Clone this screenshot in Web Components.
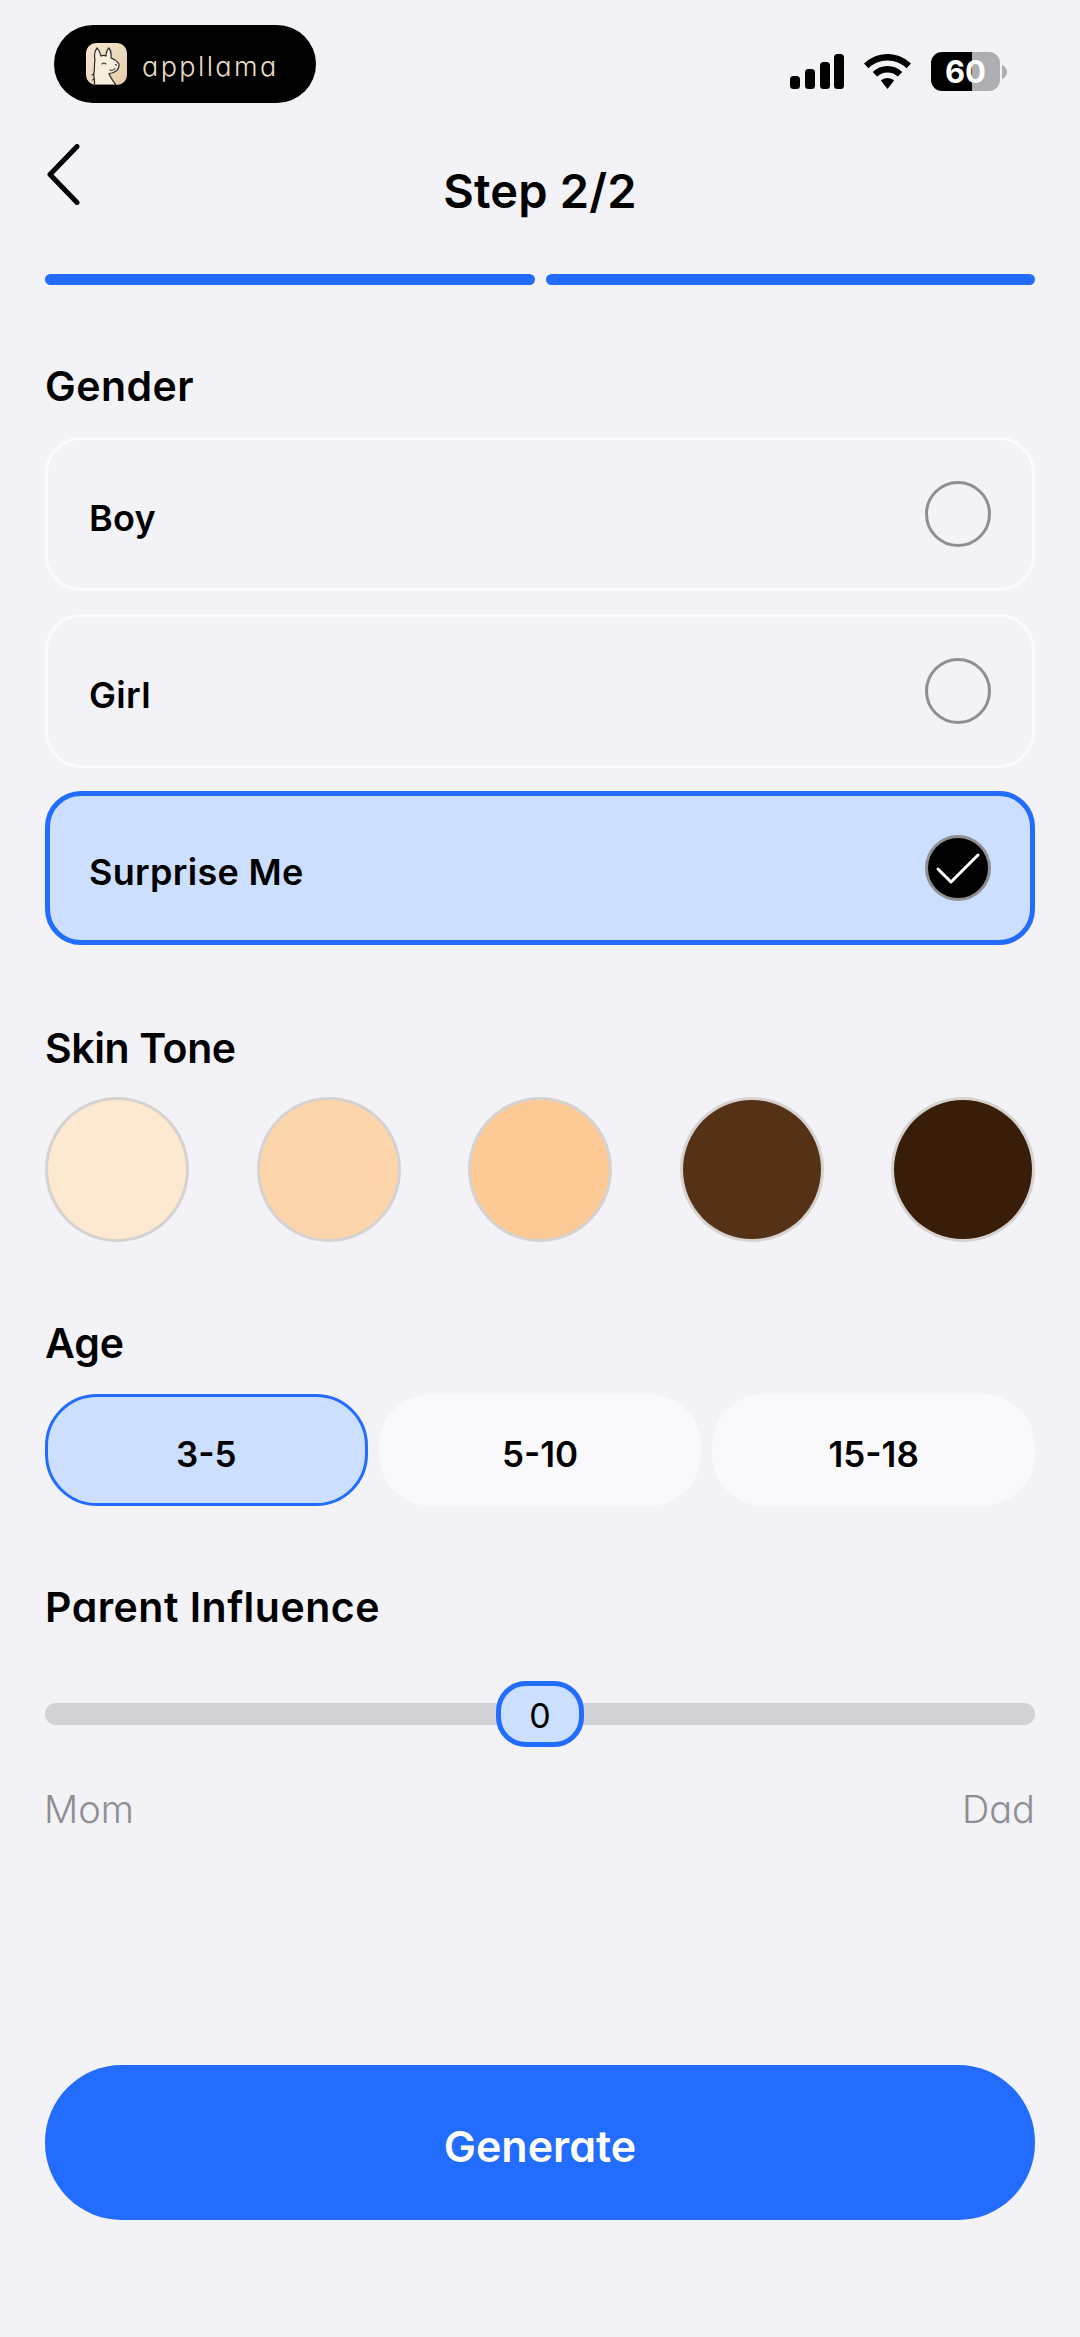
<!DOCTYPE html>
<html><head><meta charset="utf-8"><title>Step 2/2</title>
<style>
html,body{margin:0;padding:0;background:#f2f2f7}
body{font-family:"Inter","Noto Sans",sans-serif;color:#000;font-feature-settings:"cv11"}
</style></head><body>
<app-screen>
  <status-bar></status-bar>
  <nav-header>Step 2/2</nav-header>
  <step-progress></step-progress>
  <section-label style="margin-top:76px;margin-bottom:27px;letter-spacing:.5px">Gender</section-label>
  <option-list>
    <option-card>Boy</option-card>
    <option-card>Girl</option-card>
    <option-card selected>Surprise Me</option-card>
  </option-list>
  <section-label style="margin-top:78px;margin-bottom:25px;letter-spacing:-.4px">Skin Tone</section-label>
  <swatch-row>
    <skin-swatch color="#fde8d0"></skin-swatch>
    <skin-swatch color="#fdd5ab"></skin-swatch>
    <skin-swatch color="#fdc995"></skin-swatch>
    <skin-swatch color="#553216"></skin-swatch>
    <skin-swatch color="#381e09"></skin-swatch>
  </swatch-row>
  <section-label style="margin-top:76px;margin-bottom:27px">Age</section-label>
  <pill-row>
    <age-pill selected>3-5</age-pill>
    <age-pill>5-10</age-pill>
    <age-pill>15-18</age-pill>
  </pill-row>
  <section-label style="margin-top:76px;letter-spacing:.5px">Parent Influence</section-label>
  <influence-slider left="Mom" right="Dad" value="0"></influence-slider>
  <primary-button>Generate</primary-button>
</app-screen>
<script>
function def(name, html, init){
  const t=document.createElement('template');t.innerHTML=html;
  customElements.define(name,class extends HTMLElement{
    constructor(){super();this.attachShadow({mode:'open'}).appendChild(t.content.cloneNode(true));}
    connectedCallback(){if(init)init(this,this.shadowRoot);}
  });
}
def('app-screen',`<style>:host{display:flex;flex-direction:column;box-sizing:border-box;width:1080px;height:2337px;padding:25px 45px 0;background:#f2f2f7;overflow:hidden}</style><slot></slot>`);

def('status-bar',`<style>
:host{display:flex;align-items:center;justify-content:space-between;height:78px;padding:0 28px 0 9px}
.pill{display:flex;align-items:center;box-sizing:border-box;width:262px;height:78px;border-radius:39px;background:#000;padding:0 0 0 32px;gap:15px}
.app{width:41px;height:42px;border-radius:10px;display:block;overflow:hidden;flex:none}
.name{font:300 27px/1 "Inter",sans-serif;font-feature-settings:"cv11";color:#e9dcc8;letter-spacing:2.4px;margin-top:4px}
.sys{display:flex;align-items:center;gap:20px;margin-top:15px}
svg{display:block}
.bat{display:flex;align-items:center;gap:2px}
.cell{position:relative;width:69px;height:39px;border-radius:11px;overflow:hidden;background:linear-gradient(90deg,#000 0 41px,#aeaeb2 41px);display:flex;align-items:center;justify-content:center;font:700 31px/1 "Inter","Liberation Sans",sans-serif;color:#fff}
</style>
<div class="pill">
  <svg class="app" viewBox="0 0 41 42">
    <defs><linearGradient id="g" x1="0" y1="0" x2="1" y2="1"><stop offset="0" stop-color="#f6e8d2"/><stop offset="1" stop-color="#e2cca8"/></linearGradient></defs>
    <rect width="41" height="42" fill="url(#g)"/>
    <path d="M8.500 42C9 36 7 33 8 29C9 25 8 21 9 17C8 12 8.500 8 11 5C13.500 7 14 10 15 13C17 12 18.500 12 20 13C20 10 21 7 23 5C25.500 8 25.500 11 25 15C28 16 31 18 33 21C33.500 25 31 29 26 30L23 30.500C24 34 27 38 30 42Z" fill="#f8eedd" stroke="#2e2a26" stroke-width="1.200" stroke-linejoin="round"/>
    <path d="M16 21q2-2 4 0M24 27q3 1 5-1.500M29.500 21.500l1 .5M8 31l-2 1M8.500 36l-2 1" fill="none" stroke="#2e2a26" stroke-width="1.100" stroke-linecap="round"/>
  </svg>
  <span class="name">appllama</span>
</div>
<div class="sys">
  <svg width="54" height="35" viewBox="0 0 54 35" fill="#000"><rect x="0" y="22" width="10" height="13" rx="3.500"/><rect x="15" y="15" width="10" height="20" rx="3.500"/><rect x="30" y="8" width="10" height="27" rx="3.500"/><rect x="44" y="0" width="10" height="35" rx="3.500"/></svg>
  <svg width="47" height="35" viewBox="0 0 47 35" fill="#000"><path d="M23.500 0C32.500 0 40.800 3.600 47 9.500L42.600 14.200C37.600 9.500 30.900 6.600 23.500 6.600S9.400 9.500 4.400 14.200L0 9.500C6.200 3.600 14.500 0 23.500 0Z"/><path d="M23.500 12C29.200 12 34.400 14.200 38.300 17.900L33.900 22.600C31.200 20.100 27.500 18.500 23.500 18.500S15.800 20.100 13.100 22.600L8.700 17.900C12.600 14.200 17.800 12 23.500 12Z"/><path d="M23.500 24C26 24 28.400 25 30.100 26.600L23.500 35L16.900 26.600C18.600 25 21 24 23.500 24Z"/></svg>
  <div class="bat"><div class="cell">60</div><svg width="5" height="14" viewBox="0 0 5 14"><path d="M0 0C3 1 5 4 5 7S3 13 0 14Z" fill="#aeaeb2"/></svg></div>
</div>`);

def('nav-header',`<style>
:host{display:grid;grid-template-columns:1fr auto 1fr;height:171px;align-items:start}
svg{display:block;margin:41px 0 0 2px}
h1{margin:60px 0 0;font:600 47px/56px "Inter",sans-serif;font-feature-settings:"cv11";letter-spacing:.2px;text-align:center}
</style>
<svg width="33" height="61" viewBox="0 0 33 61" fill="none" stroke="#000" stroke-width="5" stroke-linecap="round" stroke-linejoin="round"><path d="M30 2.500L3 30.500L30 58.500"/></svg>
<h1><slot></slot></h1><span></span>`);

def('step-progress',`<style>
:host{display:flex;gap:11px;height:11px}
i{flex:1;background:#226cff;border-radius:6px}
</style><i></i><i></i>`);

def('section-label',`<style>:host{display:block;font:600 41px/48px "Inter",sans-serif;font-feature-settings:"cv11";padding-top:1px;margin-bottom:-1px}</style><slot></slot>`);

def('option-list',`<style>:host{display:flex;flex-direction:column;gap:23px}</style><slot></slot>`);

def('option-card',`<style>
:host{display:flex;align-items:center;justify-content:space-between;box-sizing:border-box;height:154px;padding:0 41px 0 41px;border:3px solid #fbfbfd;border-radius:36px;font:600 36px/44px "Inter",sans-serif;font-feature-settings:"cv11";letter-spacing:.3px}
:host([selected]){background:#cddffe;border:5px solid #226cff;padding:0 39px 0 39px}
span{padding-top:8px}
.r{box-sizing:border-box;width:66px;height:66px;border-radius:50%;border:3px solid #8e8e93;display:flex;align-items:center;justify-content:center}
:host([selected]) .r{background:#000}
svg{display:none}
:host([selected]) svg{display:block}
</style><span><slot></slot></span><div class="r"><svg width="60" height="60" viewBox="0 0 60 60" fill="none" stroke="#fff" stroke-width="3" stroke-linecap="round" stroke-linejoin="round"><path d="M10 31L23 44L50 17"/></svg></div>`);

def('swatch-row',`<style>:host{display:flex;justify-content:space-between}</style><slot></slot>`);
def('skin-swatch',`<style>:host{display:block;box-sizing:border-box;width:144px;height:145px;border-radius:50%;border:3px solid #d6d2d0}</style>`,(el)=>{el.style.background=el.getAttribute('color')});

def('pill-row',`<style>:host{display:grid;grid-template-columns:repeat(3,1fr);gap:11px}</style><slot></slot>`);
def('age-pill',`<style>
:host{display:flex;align-items:center;justify-content:center;box-sizing:border-box;height:112px;border-radius:52px;background:#f9f9fb;font:600 35px/44px "Inter",sans-serif;padding-top:8px}
:host([selected]){background:#cddffe;border:3px solid #226cff}
</style><slot></slot>`);

def('influence-slider',`<style>
:host{display:block;margin-top:51px}
.wrap{height:66px;display:flex;align-items:center}
.track{flex:1;height:22px;border-radius:11px;background:#d1d1d6;display:flex;align-items:center;justify-content:center}
.thumb{box-sizing:border-box;width:88px;height:66px;border-radius:30px;border:5px solid #226cff;background:#cddffe;display:flex;align-items:center;justify-content:center;font:400 34px/1 "Inter","Liberation Sans",sans-serif;flex:none;padding-top:3px}
.ends{display:flex;justify-content:space-between;margin:38px 0 0 -1px;font:300 38px/48px "Inter",sans-serif;font-feature-settings:"cv11";color:#8e8e93}
</style>
<div class="wrap"><div class="track"><div class="thumb" id="v"></div></div></div>
<div class="ends"><span id="l"></span><span id="r"></span></div>`,(el,s)=>{
  s.getElementById('v').textContent=el.getAttribute('value');
  s.getElementById('l').textContent=el.getAttribute('left');
  s.getElementById('r').textContent=el.getAttribute('right');
});

def('primary-button',`<style>
:host{display:flex;align-items:center;justify-content:center;box-sizing:border-box;height:155px;margin-top:232px;padding-top:6px;border-radius:77px;background:#226cff;color:#fff;font:600 43px/52px "Inter",sans-serif;font-feature-settings:"cv11"}
</style><slot></slot>`);
</script>
</body></html>
